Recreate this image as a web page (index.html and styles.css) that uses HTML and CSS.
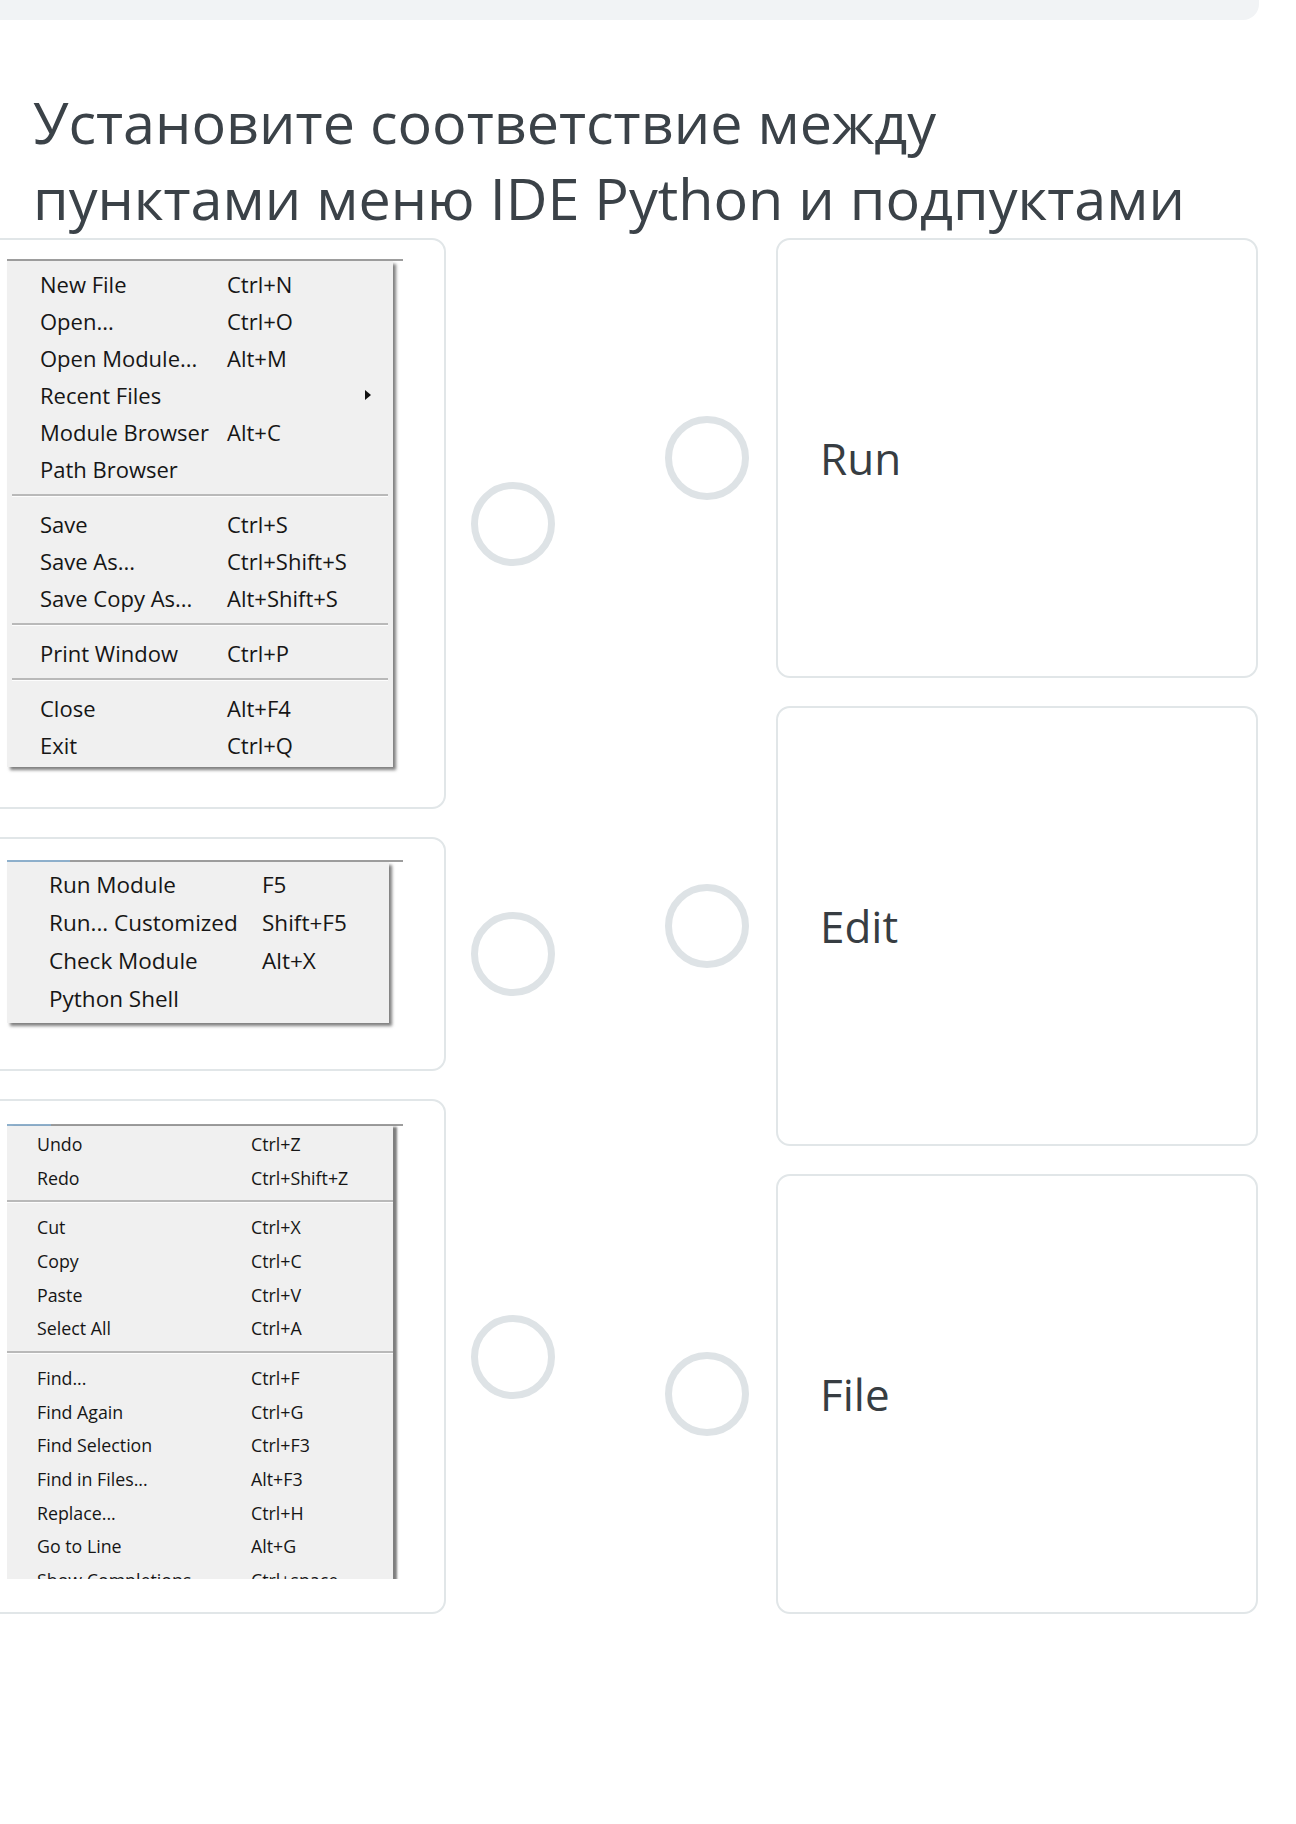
FILE: index.html
```html
<!DOCTYPE html>
<html lang="ru">
<head>
    <meta charset="UTF-8">
    <meta name="viewport" content="width=device-width, initial-scale=1.0">
    <title>Установите соответствие</title>
    <link rel="stylesheet" href="styles.css">
</head>
<body>
    <div class="topbar"></div>

    <h1 class="question">Установите соответствие между<br>пунктами меню IDE Python и подпуктами</h1>

    <div class="match">
        <div class="col col-left">
            <!-- File menu -->
            <div class="pair">
                <div class="card card-file">
                    <div class="shot shot-file">
                        <div class="menubar"></div>
                        <div class="menu menu-file">
                            <div class="item"><span class="label">New File</span><span class="key">Ctrl+N</span></div>
                            <div class="item"><span class="label">Open...</span><span class="key">Ctrl+O</span></div>
                            <div class="item"><span class="label">Open Module...</span><span class="key">Alt+M</span></div>
                            <div class="item"><span class="label">Recent Files</span><span class="key"></span><span class="arrow"></span></div>
                            <div class="item"><span class="label">Module Browser</span><span class="key">Alt+C</span></div>
                            <div class="item"><span class="label">Path Browser</span><span class="key"></span></div>
                            <div class="sep"></div>
                            <div class="item"><span class="label">Save</span><span class="key">Ctrl+S</span></div>
                            <div class="item"><span class="label">Save As...</span><span class="key">Ctrl+Shift+S</span></div>
                            <div class="item"><span class="label">Save Copy As...</span><span class="key">Alt+Shift+S</span></div>
                            <div class="sep"></div>
                            <div class="item"><span class="label">Print Window</span><span class="key">Ctrl+P</span></div>
                            <div class="sep"></div>
                            <div class="item"><span class="label">Close</span><span class="key">Alt+F4</span></div>
                            <div class="item"><span class="label">Exit</span><span class="key">Ctrl+Q</span></div>
                        </div>
                    </div>
                </div>
                <span class="radio"></span>
            </div>

            <!-- Run menu -->
            <div class="pair">
                <div class="card card-run">
                    <div class="shot shot-run">
                        <div class="menubar menubar-active"></div>
                        <div class="menu menu-run">
                            <div class="item"><span class="label">Run Module</span><span class="key">F5</span></div>
                            <div class="item"><span class="label">Run... Customized</span><span class="key">Shift+F5</span></div>
                            <div class="item"><span class="label">Check Module</span><span class="key">Alt+X</span></div>
                            <div class="item"><span class="label">Python Shell</span><span class="key"></span></div>
                        </div>
                    </div>
                </div>
                <span class="radio"></span>
            </div>

            <!-- Edit menu -->
            <div class="pair">
                <div class="card card-edit">
                    <div class="shot shot-edit">
                        <div class="menubar menubar-active short"></div>
                        <div class="menu menu-edit">
                            <div class="item"><span class="label">Undo</span><span class="key">Ctrl+Z</span></div>
                            <div class="item"><span class="label">Redo</span><span class="key">Ctrl+Shift+Z</span></div>
                            <div class="sep"></div>
                            <div class="item"><span class="label">Cut</span><span class="key">Ctrl+X</span></div>
                            <div class="item"><span class="label">Copy</span><span class="key">Ctrl+C</span></div>
                            <div class="item"><span class="label">Paste</span><span class="key">Ctrl+V</span></div>
                            <div class="item"><span class="label">Select All</span><span class="key">Ctrl+A</span></div>
                            <div class="sep"></div>
                            <div class="item"><span class="label">Find...</span><span class="key">Ctrl+F</span></div>
                            <div class="item"><span class="label">Find Again</span><span class="key">Ctrl+G</span></div>
                            <div class="item"><span class="label">Find Selection</span><span class="key">Ctrl+F3</span></div>
                            <div class="item"><span class="label">Find in Files...</span><span class="key">Alt+F3</span></div>
                            <div class="item"><span class="label">Replace...</span><span class="key">Ctrl+H</span></div>
                            <div class="item"><span class="label">Go to Line</span><span class="key">Alt+G</span></div>
                            <div class="item"><span class="label">Show Completions</span><span class="key">Ctrl+space</span></div>
                        </div>
                    </div>
                </div>
                <span class="radio"></span>
            </div>
        </div>

        <div class="col col-right">
            <div class="pair">
                <span class="radio"></span>
                <div class="card card-answer">Run</div>
            </div>
            <div class="pair">
                <span class="radio"></span>
                <div class="card card-answer">Edit</div>
            </div>
            <div class="pair">
                <span class="radio"></span>
                <div class="card card-answer">File</div>
            </div>
        </div>
    </div>
</body>
</html>
```

FILE: styles.css
```css
body {
    margin: 0;
    padding: 0;
    background: #fff;
    font-family: "Open Sans", "Noto Sans", sans-serif;
    color: #3b4248;
    overflow-x: hidden;
}

.topbar {
    height: 20px;
    margin: 0 37px 0 -20px;
    background-color: #f1f3f5;
    border-radius: 0 0 16px 16px;
}

.question {
    margin: 64px 0 2px 33px;
    font-size: 57.5px;
    font-weight: 400;
    line-height: 76px;
    color: #3b4248;
}

.match {
    display: flex;
    margin-left: -20px;
}

.col {
    display: flex;
    flex-direction: column;
    gap: 28px;
}

.col-right {
    margin-left: 110px;
}

.pair {
    display: flex;
    align-items: center;
}

.col-left .pair {
    gap: 25px;
}

.col-right .pair {
    gap: 27px;
}

.card {
    box-sizing: border-box;
    border: 2px solid #e1e6e8;
    border-radius: 14px;
    background: #fff;
}

.radio {
    display: block;
    box-sizing: border-box;
    width: 84px;
    height: 84px;
    border: 7px solid #dee3e6;
    border-radius: 50%;
    flex-shrink: 0;
}

/* left cards with menu screenshots */
.card-file,
.card-run,
.card-edit {
    width: 466px;
    padding-left: 25px;
}

.card-file {
    padding-top: 19px;
    padding-bottom: 40px;
}

.card-run {
    padding-top: 21px;
    padding-bottom: 46px;
}

.card-edit {
    padding-top: 23px;
    padding-bottom: 33px;
}

.shot {
    width: 396px;
}

.menubar {
    height: 2px;
    background: #9d9d9d;
}

.menubar-active {
    background: linear-gradient(to right, #8eb0cc 0, #8eb0cc 63px, #9d9d9d 63px);
}

.menubar-active.short {
    background: linear-gradient(to right, #8eb0cc 0, #8eb0cc 44px, #9d9d9d 44px);
}

.menu {
    width: 386px;
    background: #f0f0f0;
    box-shadow: 3px 3px 3px rgba(0, 0, 0, 0.5);
    font-family: "Open Sans", "Noto Sans", sans-serif;
    color: #161616;
}

.item {
    display: flex;
    align-items: center;
    white-space: nowrap;
}

.sep {
    margin: 0 5px;
    border-top: 2px solid #b9b9b9;
    border-bottom: 1px solid #fdfdfd;
}

.arrow {
    margin-left: auto;
    margin-right: 22px;
    width: 0;
    height: 0;
    border-top: 5px solid transparent;
    border-bottom: 5px solid transparent;
    border-left: 6px solid #111;
}

/* File menu */
.menu-file {
    padding: 4px 0;
    font-size: 22px;
}

.menu-file .item {
    height: 37px;
    padding-left: 33px;
}

.menu-file .label {
    width: 187px;
}

.menu-file .sep {
    margin-top: 7px;
    margin-bottom: 8px;
}

/* Run menu */
.menu-run {
    width: 382px;
    padding: 3px 0 6px;
    font-size: 22.5px;
}

.menu-run .item {
    height: 38px;
    padding-left: 42px;
}

.menu-run .label {
    width: 213px;
}

/* Edit menu */
.shot-edit {
    height: 455px;
    overflow: hidden;
}

.menu-edit {
    padding-top: 1px;
    font-size: 17.8px;
    box-shadow: 5px 0 2px -1px rgba(0, 0, 0, 0.5);
}

.menu-edit .item {
    height: 33.7px;
    padding-left: 30px;
}

.menu-edit .label {
    width: 214px;
}

.menu-edit .sep {
    margin: 6px 0 7px;
}

/* right answer cards */
.card-answer {
    width: 482px;
    height: 440px;
    display: flex;
    align-items: center;
    padding-left: 42px;
    font-size: 44px;
    color: #373d42;
}
```
